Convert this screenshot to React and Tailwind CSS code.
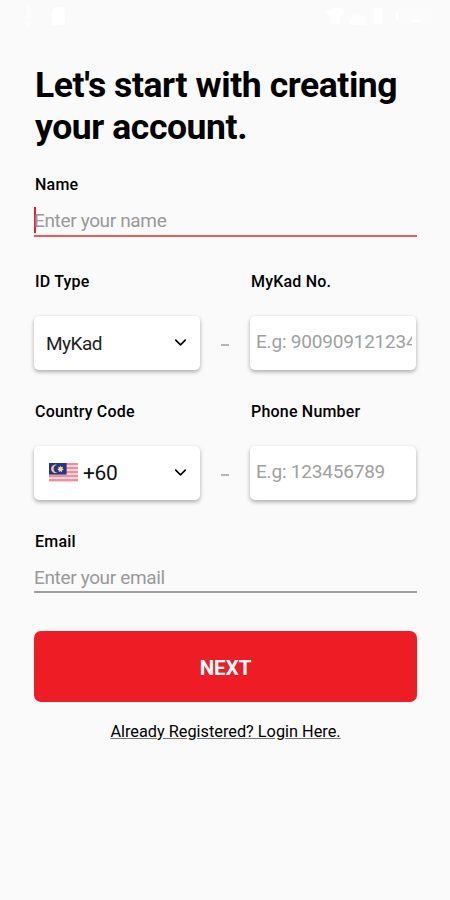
import { ChevronDown } from 'lucide-react';

function StatusBar() {
  return (
    <div className="flex h-8 items-center justify-between pl-[25px] pr-[18px] text-white">
      <div className="flex items-center gap-[20px]">
        <svg className="h-6 w-[7px]" viewBox="0 0 7 24" fill="currentColor" opacity="0.5">
          <path d="M1 1h5v14H1zM1 18h5v5H1z" />
        </svg>
        <svg className="h-[18px] w-[13px]" viewBox="0 0 13 18" fill="currentColor">
          <path d="M4 0h6l3 3v15H0V4z" />
        </svg>
      </div>
      <div className="flex items-center">
        <svg className="mr-[5px] h-[18px] w-5" viewBox="0 0 20 18" fill="currentColor" opacity="0.8">
          <path d="M0 5 7 1h11l2 5-5 5v6H6v-6z" />
        </svg>
        <svg className="mr-[9px] mt-1 h-[13px] w-[15px]" viewBox="0 0 15 13" fill="currentColor" opacity="0.8">
          <path d="m6 3 9 1v9H0V7z" />
        </svg>
        <svg className="mr-[13px] h-4 w-[9px]" viewBox="0 0 9 16" fill="currentColor">
          <path d="M0 0h9v16H0z" />
        </svg>
        <svg className="h-[14px] w-[36px]" viewBox="0 0 36 14" fill="currentColor">
          <path d="M0 0h36v14H0z" opacity="0.3" />
          <path d="M0 2h2v9H0zM17 11h7v2h-7z" />
        </svg>
      </div>
    </div>
  );
}

function MalaysiaFlag() {
  return (
    <svg className="mb-[2px] h-[19px] w-[29px]" viewBox="0 0 28 18" preserveAspectRatio="none">
      <rect width="28" height="18" fill="#fbd9dd" />
      {[0, 1, 2, 3, 4].map((i) => (
        <rect key={i} y={i * 3.8} width="28" height="1.9" fill="#f58b95" />
      ))}
      <rect width="17" height="11" fill="#26348b" />
      <path d="M8 2a4 4 0 1 0 0 7 3.2 3.2 0 1 1 0-7z" fill="#e8d27a" />
      <path d="m11 2.4.8 1.7 1.8-.5-.7 1.8 1.5 1-1.8.5-.1 1.8-1.5-1.1-1.5 1.1-.1-1.8-1.4-.5 1.3-1-.5-1.8 1.6.5z" fill="#f2dd84" />
    </svg>
  );
}

function Label({ children }) {
  return (
    <div className="whitespace-nowrap pl-px text-[16px] font-medium leading-5 tracking-[0.2px] text-black">
      {children}
    </div>
  );
}

function Box({ children, className = '' }) {
  return (
    <div
      className={`flex h-[54px] w-[166px] items-center overflow-hidden rounded-[5px] bg-white shadow-[0_2px_4px_rgba(0,0,0,0.32)] ${className}`}
    >
      {children}
    </div>
  );
}

function Row({ labels, left, right }) {
  return (
    <div className="grid grid-cols-[166px_50px_167px]">
      <Label>{labels[0]}</Label>
      <div />
      <Label>{labels[1]}</Label>
      <Box className="mt-6 justify-between pl-3 pr-[10px]">
        {left}
        <ChevronDown className="mb-[2px] h-[19px] w-[19px] text-black" strokeWidth={2} />
      </Box>
      <div className="mt-6 flex items-center justify-center pt-[4px]">
        <div className="h-0.5 w-2 bg-[#b5b5b5]" />
      </div>
      <Box className="mt-6 pl-[6px] pr-[4px]">
        <div className="mb-[2px] overflow-hidden whitespace-nowrap text-[19px] leading-6 tracking-[-0.2px] text-[#a0a0a0]">
          {right}
        </div>
      </Box>
    </div>
  );
}

export default function App() {
  return (
    <div className="h-[900px] w-[450px] overflow-hidden bg-[#fafafa] font-['Roboto',sans-serif] text-black">
      <StatusBar />
      <div className="pl-[34px] pr-[33px] pt-8">
        <h1 className="whitespace-nowrap pl-px text-[35.5px] font-bold leading-[42px] tracking-[-0.42px]">
          Let's start with creating
          <br />
          your account.
        </h1>

        <div className="mt-[27px]">
          <Label>Name</Label>
          <div className="mt-3 flex h-[30px] border-b-2 border-[#ec5a60]">
            <div className="h-[26px] w-0.5 bg-[#e3202a]" />
            <span className="-ml-0.5 pt-[2px] text-[19px] leading-6 tracking-[-0.35px] text-[#999]">
              Enter your name
            </span>
          </div>
        </div>

        <div className="mt-[35px]">
          <Row
            labels={['ID Type', 'MyKad No.']}
            left={<span className="pt-px text-[19px] leading-6 tracking-[-0.5px] text-[#222]">MyKad</span>}
            right="E.g: 900909121234"
          />
        </div>

        <div className="mt-8">
          <Row
            labels={['Country Code', 'Phone Number']}
            left={
              <span className="flex items-center gap-[5px] pl-[3px] text-[21px] leading-6 tracking-[-0.3px] text-[#111]">
                <MalaysiaFlag />
                +60
              </span>
            }
            right="E.g: 123456789"
          />
        </div>

        <div className="mt-8">
          <Label>Email</Label>
          <div className="mt-3 h-[29px] border-b-2 border-[#a0a0a0] pt-[2px] text-[19px] leading-6 tracking-[-0.35px] text-[#999]">
            Enter your email
          </div>
        </div>

        <button className="mt-[38px] flex h-[71px] w-full items-center justify-center rounded-[7px] bg-[#ee1c25] pt-[3px] text-[20.5px] font-bold text-white">
          NEXT
        </button>
        <div className="mt-5 text-center text-[16.3px] leading-5">
          <a className="underline decoration-[#777] underline-offset-1">Already Registered? Login Here.</a>
        </div>
      </div>
    </div>
  );
}
